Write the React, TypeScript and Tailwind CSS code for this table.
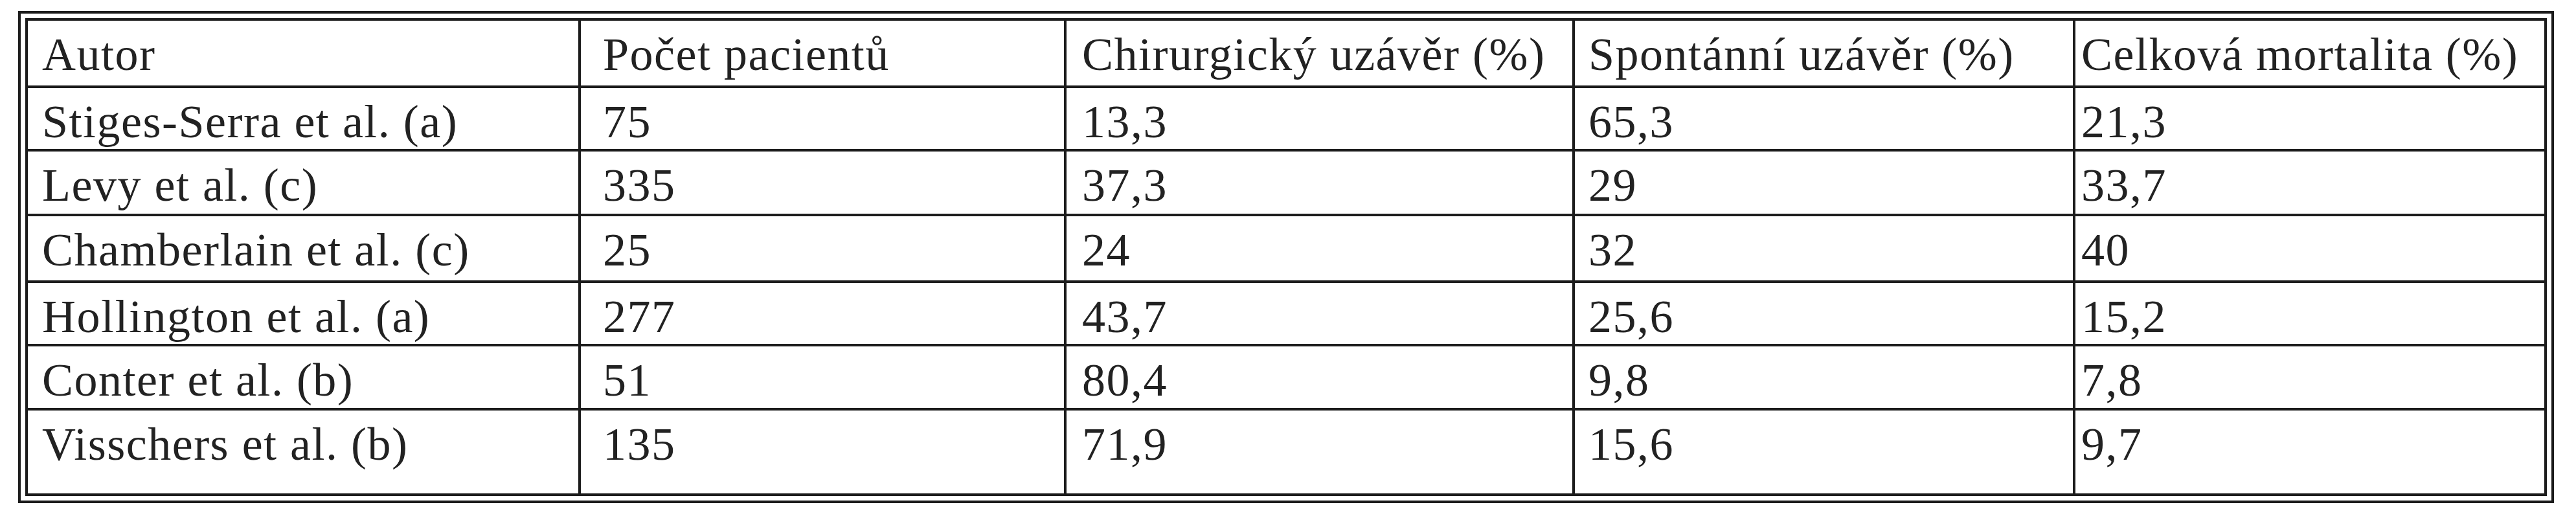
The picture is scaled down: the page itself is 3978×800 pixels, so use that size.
import React from "react";

const header = [
  "Autor",
  "Počet pacientů",
  "Chirurgický uzávěr (%)",
  "Spontánní uzávěr (%)",
  "Celková mortalita (%)",
];

const rows: string[][] = [
  ["Stiges-Serra et al. (a)", "75", "13,3", "65,3", "21,3"],
  ["Levy et al. (c)", "335", "37,3", "29", "33,7"],
  ["Chamberlain et al. (c)", "25", "24", "32", "40"],
  ["Hollington et al. (a)", "277", "43,7", "25,6", "15,2"],
  ["Conter et al. (b)", "51", "80,4", "9,8", "7,8"],
  ["Visschers et al. (b)", "135", "71,9", "15,6", "9,7"],
];

const padClasses = ["pl-[22px]", "pl-[34px]", "pl-[24px]", "pl-[21px]", "pl-[9px]"];

function Cell({ text, col }: { text: string; col: number }) {
  return (
    <div
      className={`border-r-4 border-b-4 border-[#1c1c1c] pt-[12px] leading-[80px] whitespace-nowrap overflow-hidden ${padClasses[col]}`}
    >
      {text}
    </div>
  );
}

export default function App() {
  return (
    <div className="w-[3978px] h-[800px] bg-white pt-[17px] pl-[28px]">
      <div className="w-[3916px] h-[760px] border-4 border-[#1c1c1c] p-[7px]">
        <div
          className="grid grid-cols-[854px_750px_785px_773px_728px] grid-rows-[104px_98px_100px_103px_98px_99px_132px] border-l-4 border-t-4 border-[#1c1c1c] font-['Liberation_Serif','Times_New_Roman',serif] text-[72px] tracking-[1.5px] text-[#222222]"
        >
          {header.map((h, i) => (
            <Cell key={"h" + i} text={h} col={i} />
          ))}
          {rows.map((r, ri) =>
            r.map((c, ci) => <Cell key={ri + "-" + ci} text={c} col={ci} />)
          )}
        </div>
      </div>
    </div>
  );
}
